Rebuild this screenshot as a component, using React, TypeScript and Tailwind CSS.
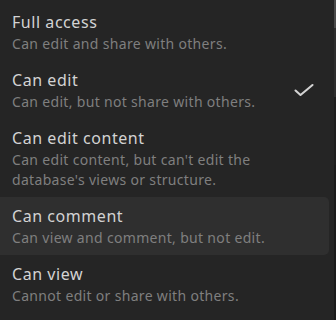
const options = [
  { title: "Full access", desc: ["Can edit and share with others."] },
  { title: "Can edit", desc: ["Can edit, but not share with others."], checked: true },
  { title: "Can edit content", desc: ["Can edit content, but can't edit the", "database's views or structure."] },
  { title: "Can comment", desc: ["Can view and comment, but not edit."], hover: true },
  { title: "Can view", desc: ["Cannot edit or share with others."] },
];

export default function App() {
  return (
    <div
      className="relative h-[320px] w-[336px] overflow-hidden bg-[#252525] pt-[3px]"
      style={{ fontFamily: '"Noto Sans", "Open Sans", sans-serif' }}
    >
      {options.map((o) => (
        <div
          key={o.title}
          className={`flex w-[329px] items-center rounded-r-[5px] py-[7px] pl-[12px] pr-[15px] ${o.hover ? "bg-[#2f2f2f]" : ""}`}
        >
          <div className="flex-1">
            <div className="text-[16px] leading-[24px] tracking-[0.55px] text-[#d3d3d3]">{o.title}</div>
            {o.desc.map((d) => (
              <div key={d} className="text-[14px] leading-[20px] tracking-[0.32px] text-[#7f7f7f]">
                {d}
              </div>
            ))}
          </div>
          {o.checked && (
            <svg width="20" height="14" viewBox="0 0 20 14">
              <polyline points="1.5,7.5 6.5,12 18.5,2" fill="none" stroke="#d3d3d3" strokeWidth="2.1" strokeLinecap="round" strokeLinejoin="round" />
            </svg>
          )}
        </div>
      ))}
      <div className="absolute right-0 top-0 flex h-full w-[2px] flex-col">
        <div className="h-[28px] bg-[#4a4a4a]" />
        <div className="h-[69px] bg-[#2e2e2e]" />
        <div className="h-[68px] bg-[#1e1e1e]" />
        <div className="flex-1 bg-[#1b1b1b]" />
      </div>
    </div>
  );
}
